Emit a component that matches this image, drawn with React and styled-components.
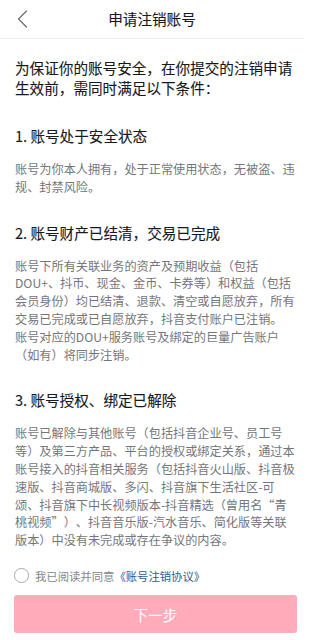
import React, { useState } from "react";
import styled, { createGlobalStyle, css } from "styled-components";

const GlobalStyle = createGlobalStyle`
  html, body {
    margin: 0;
    padding: 0;
    background: #ffffff;
  }
  body {
    font-family: "Noto Sans CJK SC", "Noto Sans", sans-serif;
    -webkit-font-smoothing: antialiased;
    text-spacing-trim: space-all;
  }
  * { box-sizing: border-box; }
`;

const medium = css`
  font-weight: 400;
  -webkit-text-stroke: 0.12px currentColor;
`;

const Page = styled.div`
  width: 304px;
  height: 640px;
  display: flex;
  flex-direction: column;
  background: #fff;
  color: #161823;
`;

const NavBar = styled.header`
  height: 39px;
  border-bottom: 1px solid #ececec;
  display: grid;
  grid-template-columns: 48px 1fr 48px;
  align-items: center;
`;

const BackButton = styled.button`
  border: 0;
  background: none;
  padding: 0 0 0 16px;
  height: 100%;
  display: flex;
  align-items: center;
  cursor: pointer;
`;

const Title = styled.h1`
  margin: 0;
  text-align: center;
  font-size: 14.6px;
  line-height: 20px;
  ${medium};
  color: #161823;
`;

const Content = styled.main`
  padding: 19px 8px 0 15px;
`;

const Intro = styled.p`
  margin: 0;
  font-size: 14.6px;
  line-height: 20px;
  ${medium};
  color: #161823;
`;

const Section = styled.section`
  margin-top: ${(p) => (p.$first ? "28px" : "26px")};
`;

const Heading = styled.h2`
  margin: 0 0 15px;
  font-size: 14.6px;
  line-height: 20px;
  ${medium};
  color: #161823;
`;

const Body = styled.p`
  margin: 0;
  font-size: 12.16px;
  line-height: 17.8px;
  color: #75767b;
  text-spacing-trim: space-all;
`;

const Footer = styled.footer`
  margin-top: auto;
  padding: 0 7px 7px 14px;
  display: flex;
  flex-direction: column;
  gap: 9.5px;
`;

const AgreeRow = styled.label`
  height: 20px;
  display: flex;
  align-items: center;
  gap: 6.5px;
  font-size: 11.35px;
  color: #86878b;
  cursor: pointer;
`;

const Radio = styled.span`
  width: 14.5px;
  height: 14.5px;
  border-radius: 50%;
  border: 1px solid ${(p) => (p.$checked ? "#fe2c55" : "#a9a9ab")};
  background: ${(p) => (p.$checked ? "#fe2c55" : "#fff")};
  flex: none;
`;

const Link = styled.a`
  color: #2d5b93;
  text-decoration: none;
`;

const NextButton = styled.button`
  height: 38px;
  width: 100%;
  border: 0;
  border-radius: 3px;
  background: ${(p) => (p.$enabled ? "#fe2c55" : "#feabba")};
  color: #fff;
  font-family: inherit;
  font-size: 14.6px;
  font-weight: 400;
`;

export default function App() {
  const [checked, setChecked] = useState(false);
  return (
    <Page lang="zh-CN">
      <GlobalStyle />
      <NavBar>
        <BackButton aria-label="返回">
          <svg width="12" height="18" viewBox="0 0 12 18" fill="none">
            <path d="M10.5 1 L2.5 9 L10.5 17" stroke="#6b6c70" strokeWidth="1.2" strokeLinecap="round" strokeLinejoin="round" />
          </svg>
        </BackButton>
        <Title>申请注销账号</Title>
        <span />
      </NavBar>
      <Content>
        <Intro>为保证你的账号安全，在你提交的注销申请生效前，需同时满足以下条件：</Intro>
        <Section $first>
          <Heading>1. 账号处于安全状态</Heading>
          <Body>账号为你本人拥有，处于正常使用状态，无被盗、违规、封禁风险。</Body>
        </Section>
        <Section>
          <Heading>2. 账号财产已结清，交易已完成</Heading>
          <Body>
            账号下所有关联业务的资产及预期收益（包括DOU+、抖币、现金、金币、卡券等）和权益（包括会员身份）均已结清、退款、清空或自愿放弃，所有交易已完成或已自愿放弃，抖音支付账户已注销。
            <br />
            账号对应的DOU+服务账号及绑定的巨量广告账户（如有）将同步注销。
          </Body>
        </Section>
        <Section>
          <Heading>3. 账号授权、绑定已解除</Heading>
          <Body>
            账号已解除与其他账号（包括抖音企业号、员工号等）及第三方产品、平台的授权或绑定关系，通过本账号接入的抖音相关服务（包括抖音火山版、抖音极速版、抖音商城版、多闪、抖音旗下生活社区-可颂、抖音旗下中长视频版本-抖音精选（曾用名“青桃视频”）、抖音音乐版-汽水音乐、简化版等关联版本）中没有未完成或存在争议的内容。
          </Body>
        </Section>
      </Content>
      <Footer>
        <AgreeRow onClick={() => setChecked((c) => !c)}>
          <Radio $checked={checked} />
          <span>
            我已阅读并同意<Link href="#">《账号注销协议》</Link>
          </span>
        </AgreeRow>
        <NextButton $enabled={checked}>下一步</NextButton>
      </Footer>
    </Page>
  );
}
